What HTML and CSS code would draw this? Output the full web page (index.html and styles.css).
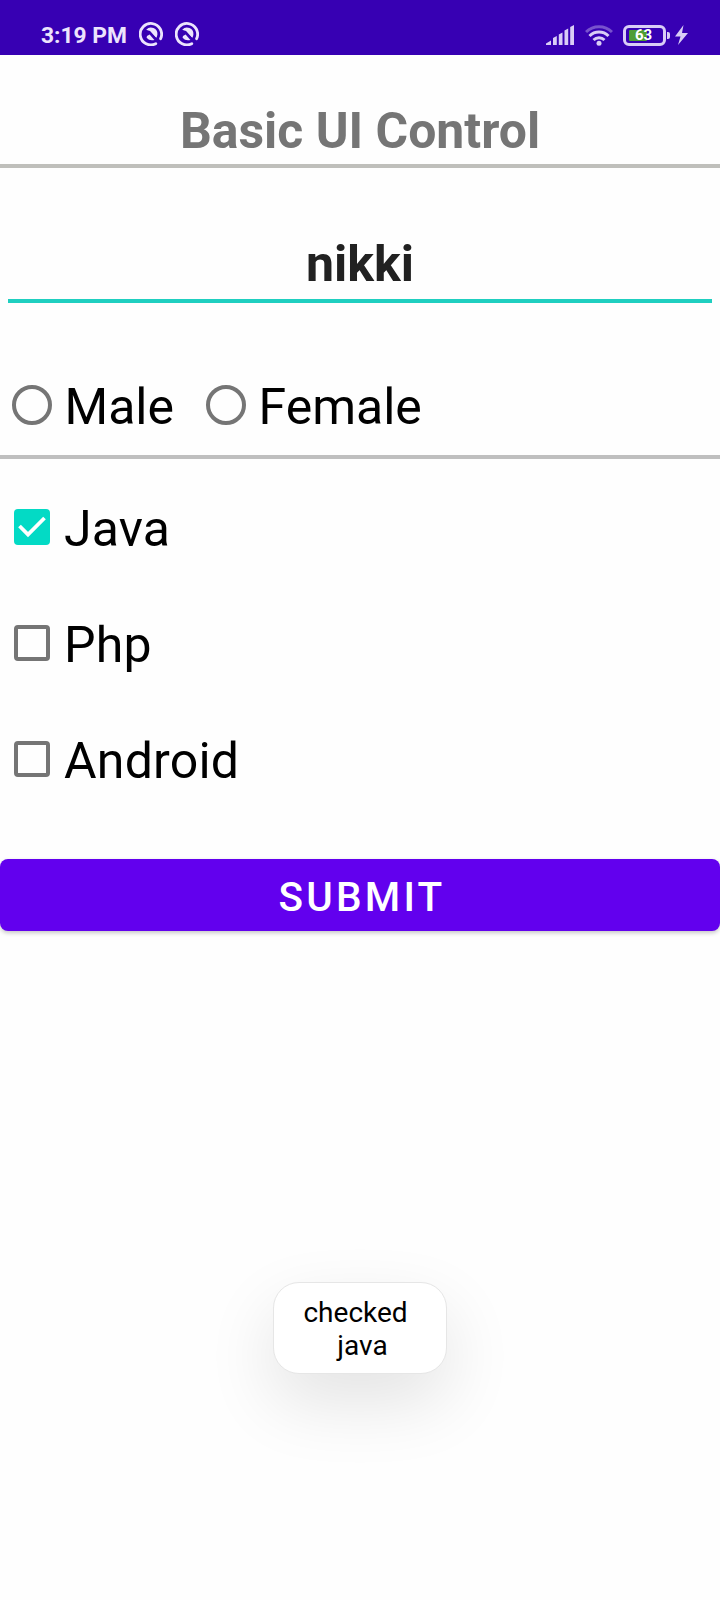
FILE: index.html
```html
<!DOCTYPE html>
<html lang="en">
<head>
<meta charset="utf-8">
<title>Basic UI Control</title>
<link rel="stylesheet" href="styles.css">
</head>
<body>
<svg class="defs" width="0" height="0">
  <symbol id="q" viewBox="0 0 24 24">
    <path d="M16.800 21.700A10.700 10.700 0 1 1 21.600 16.700" fill="none" stroke="currentColor" stroke-width="2.800" stroke-linecap="round"/>
    <path d="M7.200 7.800A6.400 6.400 0 0 1 18.400 12.500Q18.200 14.500 17.100 16L10.800 8.900Z" fill="currentColor"/>
    <path d="M8 14L10.600 12.600 15.400 18Q10.500 19.300 7.600 15.800Z" fill="currentColor"/>
    <path d="M6 12.600L10.500 9.800 20 20.300" fill="none" stroke="#3700b3" stroke-width="1.800"/>
  </symbol>
</svg>
<header class="status">
  <div class="left">
    <span class="time">3:19 PM</span>
    <svg class="q" width="24" height="24"><use href="#q"/></svg>
    <svg class="q" width="24" height="24"><use href="#q"/></svg>
  </div>
  <div class="right">
    <svg class="signal" width="28" height="20" viewBox="0 0 28 20" fill="currentColor"><path d="M0 20v-1.500l5-3V20ZM7 13l3.800-2v9H7ZM12.800 9.500l3.700-2V20H12.800ZM18.500 5.500l3.700-2V20h-3.700ZM24.200 2l3.800-2v20h-3.800Z"/></svg>
    <svg class="wifi" width="28" height="22" viewBox="0 0 28 22" fill="none" stroke="currentColor" stroke-width="3"><path opacity=".4" d="M1 8A18.500 18.500 0 0 1 27 8"/><path d="M4.500 12A13.500 13.500 0 0 1 23.500 12M8.500 16A8 8 0 0 1 19.500 16"/><circle cx="14" cy="19.300" r="2.500" fill="currentColor" stroke="none"/></svg>
    <span class="battery"><span class="level"></span><span class="percent">63</span></span>
    <span class="nub"></span>
    <svg class="bolt" width="13" height="20" viewBox="0 0 13 20" fill="currentColor"><path d="M8.500 0L0 11.500H5.500L3 20 13 8H7Z"/></svg>
  </div>
</header>
<main>
  <h1 class="title">Basic UI Control</h1>
  <div class="name">nikki</div>
  <div class="radios">
    <div class="option"><span class="radio"></span><span>Male</span></div>
    <div class="option"><span class="radio"></span><span>Female</span></div>
  </div>
  <div class="checks">
    <div class="option"><span class="box checked"><svg width="36" height="36" viewBox="0 0 36 36"><path d="M5.500 17L14 25.500 30.500 9" fill="none" stroke="#fff" stroke-width="3.800"/></svg></span><span>Java</span></div>
    <div class="option"><span class="box"></span><span>Php</span></div>
    <div class="option"><span class="box"></span><span>Android</span></div>
  </div>
  <button class="submit">SUBMIT</button>
</main>
<div class="toast">checked 
 java</div>
</body>
</html>
```
FILE: styles.css
```css
* { box-sizing: border-box; }
body {
  margin: 0;
  position: relative;
  height: 1600px;
  overflow: hidden;
  background: #fefefe;
  color: #000;
  font-family: Roboto, sans-serif;
  font-size: 50px;
}
.defs { display: block; }
.status {
  height: 55px;
  padding: 15px 32px 0 41px;
  display: flex;
  justify-content: space-between;
  background: #3700b3;
  color: #ece4fd;
}
.left, .right { display: flex; align-items: center; height: 40px; }
.time { width: 86px; padding-top: 1px; font-size: 22.800px; font-weight: 700; line-height: 40px; white-space: nowrap; }
.q { margin-left: 12px; margin-top: -2px; }
.right { color: #d9cdf6; }
.wifi { margin-left: 11px; }
.battery {
  width: 43px;
  height: 21px;
  margin-left: 10px;
  border: 3px solid #d9cdf6;
  border-radius: 6px;
  padding: 2px 3px;
  position: relative;
}
.level { display: block; width: 18px; height: 11px; border-radius: 1px; background: #4e9d35; }
.percent {
  position: absolute;
  inset: 0 2px 0 0;
  text-align: center;
  font-size: 15px;
  font-weight: 700;
  line-height: 15px;
  color: #fff;
}
.nub { width: 3px; height: 7px; margin-left: 1px; border-radius: 0 2px 2px 0; background: #d9cdf6; }
.bolt { margin-left: 5px; }
.title {
  margin: 0;
  height: 113px;
  padding-top: 46px;
  border-bottom: 4px solid #bfbfbb;
  text-align: center;
  font-size: 49.900px;
  line-height: 60px;
  font-weight: 700;
  color: #757575;
}
.name {
  height: 135px;
  margin: 0 8px;
  padding-top: 66px;
  border-bottom: 4px solid #1fcfc0;
  text-align: center;
  line-height: 60px;
  font-weight: 700;
  color: #212121;
}
.radios {
  height: 156px;
  padding: 74px 12px 0;
  display: flex;
  gap: 32px;
  border-bottom: 4px solid #bfbfbf;
}
.option { display: flex; align-items: flex-start; line-height: 60px; }
.radio { width: 40px; height: 40px; margin: 8px 12.500px 0 0; border: 4px solid #757575; border-radius: 50%; }
.checks { padding: 40px 14px 0; height: 400px; letter-spacing: .2px; }
.checks .option { height: 116px; }
.box { width: 36px; height: 36px; margin: 10px 14px 0 0; border: 4px solid #757575; border-radius: 4px; }
.checked { border: 0; background: #03dac5; }
.checked svg { display: block; }
.submit {
  display: block;
  width: 100%;
  height: 72px;
  padding: 4px 0 0 4px;
  border: 0;
  border-radius: 8px;
  background: #6200ee;
  box-shadow: 0 2px 4px rgba(0, 0, 0, .22);
  color: #fff;
  font: 500 40.500px/68px Roboto, sans-serif;
  letter-spacing: 3.200px;
}
.toast {
  position: absolute;
  left: 273px;
  top: 1282px;
  width: 174px;
  height: 92px;
  padding: 13px 2px 0 0;
  border: 1px solid #e6e6e6;
  border-radius: 26px;
  background: #fff;
  box-shadow: 0 28px 70px rgba(0, 0, 0, .11);
  text-align: center;
  font-size: 28px;
  line-height: 33px;
  white-space: pre;
}
```
